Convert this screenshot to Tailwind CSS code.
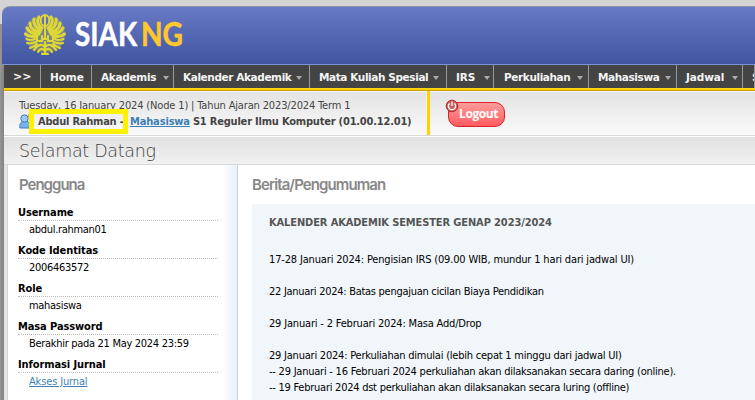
<!DOCTYPE html>
<html lang="id">
<head>
<meta charset="utf-8">
<title>SIAK NG</title>
<script src="https://cdn.jsdelivr.net/npm/@tailwindcss/browser@4"></script>
</head>
<body class="w-[755px] h-[400px] overflow-hidden bg-[#d4d4d4] font-['DejaVu_Sans_Condensed','DejaVu_Sans',sans-serif] text-[11px] text-black">
<div class="h-[400px] pt-[6px] pl-1 bg-linear-to-r from-[#989694] to-[#858381] bg-[length:4px_376px] bg-no-repeat bg-[position:0_24px] whitespace-nowrap">
  <header class="flex h-[59px] -ml-[2px] pl-[22px] pt-[8px] border-t border-[#8f93a5] border-b border-b-[#7d92d2] rounded-tl-[8px] bg-linear-to-b from-[#687ac6] to-[#40549f]">
    <svg class="w-[42px] h-[42px] shrink-0 -mt-px" viewBox="0 0 42 42" fill="none" stroke="#dfd736" stroke-linecap="round">
      <path d="M2 14C4 5 11 3 15 2L17 14L20 17H22L25 14L27 2C31 3 38 5 40 14C43 23 38 32 34 36L26 38L21 41L16 38L8 36C4 32 -1 23 2 14Z" fill="#b9b545" fill-opacity=".38" stroke="none"/>
      <ellipse cx="21" cy="6.500" rx="4.300" ry="5.500" stroke-width="2"/>
      <path d="M21 2V24" stroke-width="2"/>
      <path d="M15 3C12 8 15 12 18 14M10 5C9 11 12 14 17 16M6 9C6 14 10 17 16 18M3 14C5 18 9 20 15 20M1.500 20C5 23 9 23 13 22M27 3C30 8 27 12 24 14M32 5C33 11 30 14 25 16M36 9C36 14 32 17 26 18M39 14C37 18 33 20 27 20M40.500 20C37 23 33 23 29 22" stroke-width="3.100"/>
      <path d="M13 22V27H18V22M29 22V27H24V22M18 25H24M2.500 25C7 27 9 26 11 25M3 29C7 30 9 29 12 28M6 34C9 33 11 32 13 30M39.500 25C35 27 33 26 31 25M39 29C35 30 33 29 30 28M36 34C33 33 31 32 29 30M10 36C13 31 18 29 21 33C24 29 29 31 32 36M14 38C16 34 19 34 21 37C23 34 26 34 28 38M18 40H24M21 28V40" stroke-width="2.200"/>
    </svg>
    <svg class="w-[120px] h-[42px] ml-[8px] shrink-0" viewBox="0 0 120 42" font-family="Lato, sans-serif" font-weight="700" font-size="31.500">
      <text x="1" y="31" textLength="62" lengthAdjust="spacingAndGlyphs" fill="#fff" stroke="#fff" stroke-width=".5">SIAK</text>
      <text x="67" y="31" textLength="42" lengthAdjust="spacingAndGlyphs" fill="#ffc72f" stroke="#ffc72f" stroke-width=".5">NG</text>
    </svg>
  </header>

  <nav class="flex h-[25px] border-b-2 border-[#ffd200] shadow-[0_1px_0_#c99a00] relative bg-[#444] text-[#f4f4f4] font-['DejaVu_Sans',sans-serif] font-bold text-[10.5px] leading-[22px] tracking-[-0.4px] *:shrink-0 *:border-r *:border-[#999] *:flex *:items-center *:pl-[9px]">
    <a class="w-[37px]"><span class="text-[11px] tracking-normal">&gt;&gt;</span></a>
    <a class="w-[51px]"><span class="tracking-[-0.1px]">Home</span></a>
    <a class="w-[82px]"><span class="tracking-[-0.3px]">Akademis</span><i class="ml-auto mr-[4px] mt-[2px] border-x-[3.5px] border-x-transparent border-t-4 border-t-[#aaa]"></i></a>
    <a class="w-[136px]"><span>Kalender Akademik</span><i class="ml-auto mr-[7px] mt-[2px] border-x-[3.5px] border-x-transparent border-t-4 border-t-[#aaa]"></i></a>
    <a class="w-[137px]"><span>Mata Kuliah Spesial</span><i class="ml-auto mr-[7px] mt-[2px] border-x-[3.5px] border-x-transparent border-t-4 border-t-[#aaa]"></i></a>
    <a class="w-[47px]"><span class="tracking-[-0.1px]">IRS</span><i class="ml-auto mr-[3px] mt-[2px] border-x-[3.5px] border-x-transparent border-t-4 border-t-[#aaa]"></i></a>
    <a class="w-[95px]"><span class="ml-px">Perkuliahan</span><i class="ml-auto mr-[5px] mt-[2px] border-x-[3.5px] border-x-transparent border-t-4 border-t-[#aaa]"></i></a>
    <a class="w-[88px]"><span>Mahasiswa</span><i class="ml-auto mr-[5px] mt-[2px] border-x-[3.5px] border-x-transparent border-t-4 border-t-[#aaa]"></i></a>
    <a class="w-[66px]"><span class="tracking-[-0.1px]">Jadwal</span><i class="ml-auto mr-[4px] mt-[2px] border-x-[3.5px] border-x-transparent border-t-4 border-t-[#aaa]"></i></a>
    <a class="w-[12px] overflow-hidden">S</a>
  </nav>

  <section class="flex h-[46px] border-t-2 border-t-[#f8f8f8] border-b border-b-[#d8d8d8] bg-linear-to-b from-[#e3e3e3] to-[#fafafa] text-[#444]">
    <div class="relative w-[426px] -mt-[1px] pt-[7px] pl-[15px] border-r-[3px] border-[#ffd200] shadow-[inset_-1px_0_0_#f5f5f5] leading-[15px]">
      <p class="tracking-[-0.15px]">Tuesday, 16 January 2024 (Node 1) | Tahun Ajaran 2023/2024 Term 1</p>
      <div class="flex items-center font-bold">
        <svg class="w-[13px] h-[16px] shrink-0" viewBox="0 0 13 16"><path d="M1 15C0 10 3 8 6 8C10 8 12 11 11 15Z" fill="#78b2ed" stroke="#3d7cbd"/><circle cx="5.500" cy="5.500" r="3.700" fill="#9dcaf5" stroke="#3d7cbd"/><path d="M9 1L12 3L9 5Z" fill="#f3a321"/></svg>
        <span class="w-[92px] ml-[6px] tracking-[-0.22px] shrink-0">Abdul Rahman -</span>
        <a class="text-[#3d7fb5] underline tracking-[-0.15px]">Mahasiswa</a>
        <span class="ml-[3px] tracking-[-0.2px]">S1 Reguler Ilmu Komputer (01.00.12.01)</span>
      </div>
      <div class="absolute left-[25px] top-[18px] w-[99px] h-[25px] border-[5px] border-[#fff200]"></div>
    </div>
    <a class="relative mt-[10px] ml-[18px] w-[57px] h-[25px] rounded-[10px] border border-[#d8232b] bg-linear-to-b from-[#ff9b9b] to-[#ff5960] pl-[10px] leading-[22px] text-white font-bold font-['Open_Sans',sans-serif] text-[12px] tracking-[-0.4px]">Logout
      <svg class="absolute -left-[4px] -top-[4px] w-[14px] h-[14px]" viewBox="0 0 14 14"><circle cx="7" cy="7" r="5.800" fill="#d06060" stroke="#a52a2a"/><path d="M4.500 4.500A3.600 3.600 0 1 0 9.500 4.500M7 2.500V7" fill="none" stroke="#fff" stroke-width="1.300"/></svg>
    </a>
  </section>

  <div class="h-[29px] border-t border-t-white border-b border-b-[#d8d8d8] bg-linear-to-b from-[#e2e2e2] to-[#f1f1f1] pl-[15px]">
    <svg class="w-[150px] h-[27px]" viewBox="0 0 150 27" font-family="'DejaVu Sans', sans-serif" font-weight="200" font-size="17.500"><text x="0" y="19.500" textLength="137" fill="#444">Selamat Datang</text></svg>
  </div>

  <main class="flex h-[235px] pl-[3px] bg-[#e6e6e6]">
    <aside class="w-[231px] shrink-0 border-l border-[#d5d5d5] border-r border-r-[#bcd8ec] bg-white bg-linear-to-l from-[#e6f1fa] to-white to-[15px] pl-[10px] pr-[19px] pt-[10px]">
      <h2 class="h-[32px] pl-px font-['Inter',sans-serif] font-semibold text-[15px] leading-[20px] text-[#888] tracking-[-1px]">Pengguna</h2>
      <dl class="leading-[14px] [&_dt]:font-bold [&_dt]:tracking-[-0.1px] [&_dt]:h-[15px] [&_dt]:border-b [&_dt]:border-dotted [&_dt]:border-[#bbb] [&_dt]:-mt-px [&_dd]:h-[24px] [&_dd]:pl-[11px] [&_dd]:pt-[2px] [&_dd]:tracking-[-0.3px]">
        <dt>Username</dt><dd>abdul.rahman01</dd>
        <dt>Kode Identitas</dt><dd>2006463572</dd>
        <dt>Role</dt><dd>mahasiswa</dd>
        <dt>Masa Password</dt><dd>Berakhir pada 21 May 2024 23:59</dd>
        <dt>Informasi Jurnal</dt><dd><a class="text-[#3d7fb5] underline tracking-[-0.15px]">Akses Jurnal</a></dd>
      </dl>
    </aside>
    <article class="flex-1 bg-white pl-[14px] pt-[10px]">
      <h2 class="h-[29px] font-['Inter',sans-serif] font-semibold text-[15px] leading-[20px] text-[#888] tracking-[-0.9px]">Berita/Pengumuman</h2>
      <div class="h-[196px] bg-[#f1f6fb] pl-[17px] pt-[11px] leading-[16px]">
        <h3 class="h-[37px] font-bold text-[#555] tracking-[-0.12px]">KALENDER AKADEMIK SEMESTER GENAP 2023/2024</h3>
        <p class="h-8 tracking-[-0.16px]">17-28 Januari 2024: Pengisian IRS (09.00 WIB, mundur 1 hari dari jadwal UI)</p>
        <p class="h-8 tracking-[-0.28px]">22 Januari 2024: Batas pengajuan cicilan Biaya Pendidikan</p>
        <p class="h-8 tracking-[-0.18px]">29 Januari - 2 Februari 2024: Masa Add/Drop</p>
        <p class="tracking-[-0.22px]">29 Januari 2024: Perkuliahan dimulai (lebih cepat 1 minggu dari jadwal UI)</p>
        <p class="tracking-[-0.23px]">-- 29 Januari - 16 Februari 2024 perkuliahan akan dilaksanakan secara daring (online).</p>
        <p class="tracking-[-0.25px]">-- 19 Februari 2024 dst perkuliahan akan dilaksanakan secara luring (offline)</p>
      </div>
    </article>
  </main>
</div>
</body>
</html>
